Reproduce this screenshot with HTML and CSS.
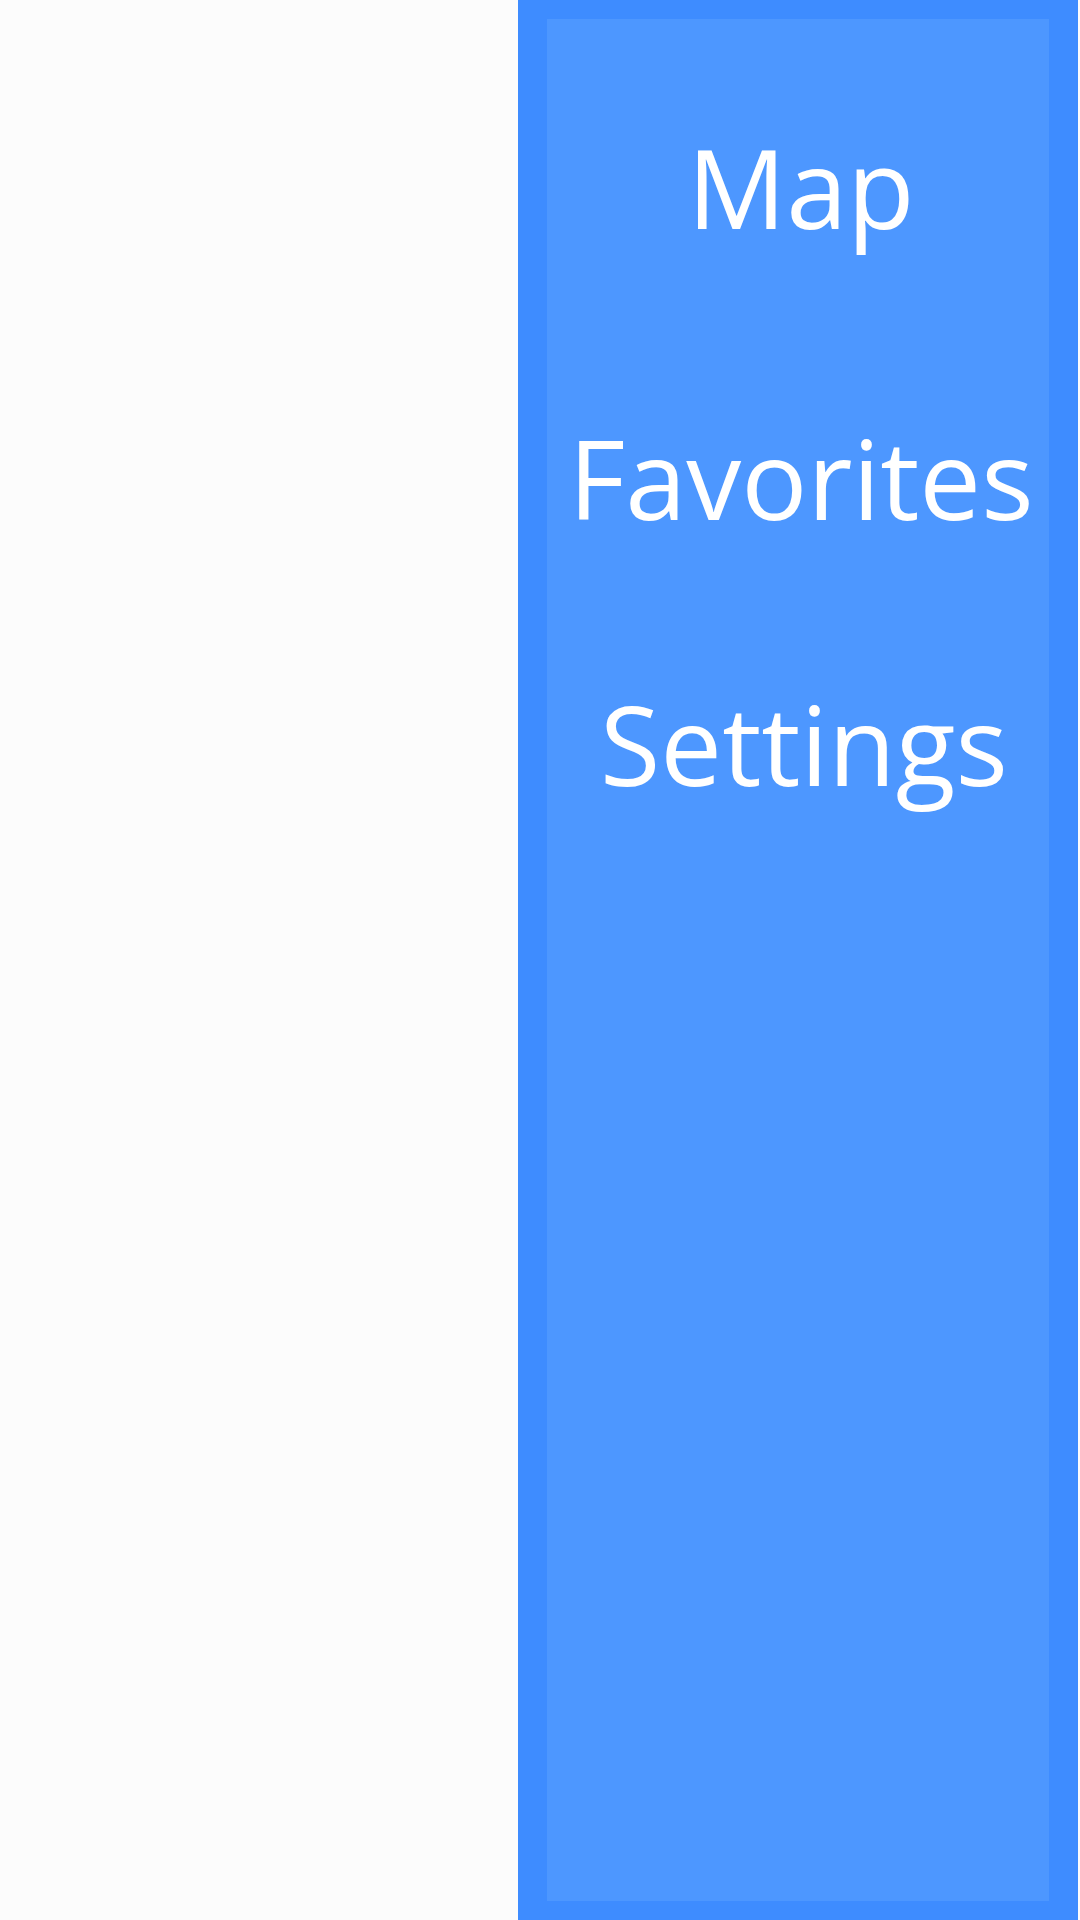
FILE: index.html
```html
<!DOCTYPE html>
<html>
<head>
<meta charset="utf-8">
<link rel="stylesheet" href="styles.css">
</head>
<body>
<div class="page">
  <div class="spacer"></div>
  <nav class="drawer">
    <div class="item item-first">Map</div>
    <div class="item item-second">Favorites</div>
    <div class="item item-third">Settings</div>
  </nav>
</div>
</body>
</html>
```
FILE: styles.css
```css
html, body {
  margin: 0;
  padding: 0;
  background: #fcfcfc;
}
.page {
  display: flex;
  width: 1080px;
  height: 1920px;
}
.spacer {
  width: 518px;
  flex: none;
}
.drawer {
  width: 560px;
  height: 1920px;
  box-sizing: border-box;
  border-style: solid;
  border-color: #3e8cff;
  border-width: 19px 29px;
  background: #4d97ff;
  display: flex;
  flex-direction: column;
  align-items: center;
  padding: 92px 0 0 6px;
  font-family: "Open Sans", sans-serif;
  font-weight: 400;
  font-size: 110px;
  color: #ffffff;
}
.item {
  line-height: 150px;
}
.item-first {
  margin-bottom: 141px;
}
.item-second {
  margin-bottom: 116px;
}
.item-third {
  padding-left: 6px;
}
```
